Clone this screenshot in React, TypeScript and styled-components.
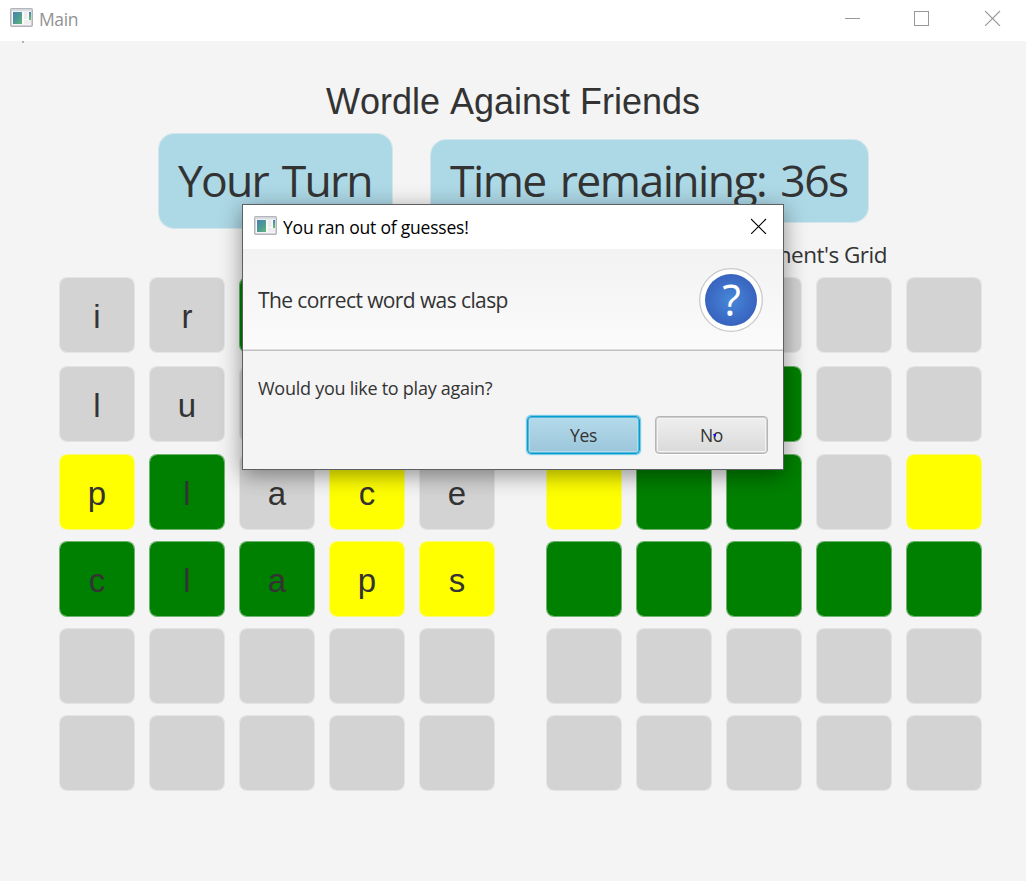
import React from "react";
import styled, { createGlobalStyle } from "styled-components";

const GlobalStyle = createGlobalStyle`
  *, *::before, *::after { box-sizing: border-box; }
  body { margin: 0; background: #f4f4f4; overflow: hidden; }
`;

const uiFont = `"Open Sans", "Noto Sans", sans-serif`;
const arial = `"Liberation Sans", Arial, sans-serif`;

const Window = styled.div`
  position: relative;
  width: 1026px;
  height: 881px;
  overflow: hidden;
  background: #f4f4f4;
  color: #333;
  font-family: ${uiFont};
`;

const Label = styled.span<{ $size: number; $spacing?: number; $color?: string; $line?: number }>`
  display: block;
  white-space: nowrap;
  font-size: ${(p) => p.$size}px;
  line-height: ${(p) => p.$line ?? 26}px;
  letter-spacing: ${(p) => p.$spacing ?? 0}px;
  color: ${(p) => p.$color ?? "#333"};
`;

const BadgeLabel = styled(Label)`
  word-spacing: 4px;
`;

const TitleBar = styled.header`
  display: flex;
  align-items: flex-start;
  justify-content: space-between;
  height: 41px;
  padding: 8px 25px 0 10px;
  background: #fff;
`;

const TitleGroup = styled.div`
  display: flex;
  gap: 6px;
`;

const TitleText = styled.div`
  margin-top: -2px;
`;

const WindowControls = styled.div`
  display: flex;
  gap: 54px;
  padding-top: 2px;
`;

const ControlGroup = styled.div`
  display: flex;
  gap: 54px;
  margin-right: 2px;
`;

const Heading = styled.h1`
  margin: 40px 0 0;
  height: 41px;
  font: 400 36px/41px ${arial};
  font-kerning: none;
  text-align: center;
  color: #333;
`;

const BadgeRow = styled.div`
  display: flex;
  align-items: center;
  gap: 37px;
  height: 96px;
  margin: 11px 0 0 158px;
`;

const Badge = styled.div<{ $width: number; $height: number }>`
  width: ${(p) => p.$width}px;
  height: ${(p) => p.$height}px;
  padding: 0 0 2px 19px;
  display: flex;
  align-items: center;
  border: 1px solid rgba(173, 216, 230, 0.5);
  border-radius: 16px;
  background: #add8e6;
  background-clip: padding-box;
`;

const GridCaption = styled.div`
  display: flex;
  justify-content: flex-end;
  margin: 13px 139px 9px 0;
`;

const Boards = styled.main`
  display: flex;
  gap: 51px;
  padding-left: 59px;
`;

const Board = styled.div`
  display: grid;
  grid-template-columns: repeat(5, 76px);
  grid-template-rows: 89px 88px repeat(4, 87px);
  column-gap: 14px;
`;

const tileColors = {
  x: ["#d3d3d3", "rgba(211,211,211,.5)"],
  g: ["#008000", "rgba(0,128,0,.55)"],
  y: ["#ffff00", "rgba(255,255,0,.5)"],
};
type Mark = keyof typeof tileColors;

const Tile = styled.div<{ $mark: Mark }>`
  height: 76px;
  border: 1px solid ${(p) => tileColors[p.$mark][1]};
  border-radius: 8px;
  background: ${(p) => tileColors[p.$mark][0]};
  background-clip: padding-box;
  font: 400 33px/78px ${arial};
  text-align: center;
  color: #333;
`;

const Dialog = styled.section`
  position: absolute;
  left: 242px;
  top: 204px;
  width: 542px;
  height: 266px;
  display: flex;
  flex-direction: column;
  border: 1px solid #5c6063;
  background: #f4f4f4;
  box-shadow: 0 5px 21px rgba(0, 0, 0, 0.42);
`;

const DialogTitle = styled.div`
  display: flex;
  align-items: center;
  justify-content: space-between;
  height: 44px;
  padding: 0 16px 0 11px;
  background: #fff;
`;

const DialogTitleGroup = styled(TitleGroup)`
  height: 22px;
`;

const DialogClose = styled.div`
  display: flex;
  padding-bottom: 2px;
`;

const DialogHeader = styled.div`
  display: flex;
  align-items: center;
  justify-content: space-between;
  height: 102px;
  padding: 0 20px 0 15px;
  border-bottom: 1px solid #c0c0c0;
  box-shadow: inset 0 -1px #dedede;
  background: linear-gradient(#f2f2f2, #fbfbfb);
`;

const HeaderText = styled.div`
  padding-top: 1px;
`;

const DialogBody = styled.div`
  padding: 24px 15px 0;
`;

const ButtonRow = styled.div`
  display: flex;
  justify-content: flex-end;
  gap: 15px;
  margin-top: 15px;
`;

const DialogButton = styled.button<{ $primary?: boolean }>`
  position: relative;
  width: 113px;
  height: 38px;
  padding: 0 0 1px;
  font-family: ${uiFont};
  border-radius: 4px;
  border: 1px solid ${(p) => (p.$primary ? "#039ed3" : "#b5b5b5")};
  background: ${(p) =>
    p.$primary ? "linear-gradient(#b4dbeb, #9bc5da)" : "linear-gradient(#efefef, #d9d9d9)"};
  box-shadow: ${(p) =>
    p.$primary
      ? "0 0 0 1px #7cc8e3, 0 0 0 2px #dceff5, inset 0 0 0 1px #58b7d9, inset 0 0 0 2px #b4dceb"
      : "inset 0 0 0 1px #cfcfcf, inset 0 0 0 2px #f3f3f3, 0 1px #fff"};
`;

const CaretDot = styled.i`
  position: absolute;
  left: 57px;
  top: 17px;
  width: 3px;
  height: 3px;
  background: #1010ff;
  clip-path: polygon(0 0, 100% 0, 100% 60%, 70% 100%, 30% 60%);
`;

const Speck = styled.i`
  position: absolute;
  left: 22px;
  top: 41px;
  width: 2px;
  height: 2px;
  background: #b4b4b4;
`;

const AppIcon = ({ id }: { id: string }) => (
  <svg width="23" height="19" viewBox="0 0 23 19">
    <defs>
      <linearGradient id={`${id}a`} x1="0" y1="0" x2="1" y2="1">
        <stop offset="0" stopColor="#4a7fb0" />
        <stop offset="0.55" stopColor="#4d9c94" />
        <stop offset="1" stopColor="#63b777" />
      </linearGradient>
      <linearGradient id={`${id}b`} x1="0" y1="0" x2="0" y2="1">
        <stop offset="0" stopColor="#4a7fb0" />
        <stop offset="1" stopColor="#62c070" />
      </linearGradient>
    </defs>
    <rect x="0.75" y="0.75" width="21.5" height="17.5" rx="1" fill="#f1f1f3" stroke="#b2b6bb" strokeWidth="1.5" />
    <rect x="1.5" y="1.5" width="20" height="2" fill="#d7dbe1" />
    <rect x="2" y="3.5" width="19" height="13" fill="#fafafa" />
    <rect x="3" y="4" width="9" height="12" fill={`url(#${id}a)`} />
    <rect x="14" y="4" width="3.5" height="7" fill="#ececec" />
    <rect x="14" y="12" width="7" height="4" fill="#eeeeee" />
    <rect x="19" y="4" width="2" height="8" fill={`url(#${id}b)`} />
  </svg>
);

const CloseIcon = ({ color }: { color: string }) => (
  <svg width="16" height="16" viewBox="0 0 16 16" stroke={color} strokeWidth="1.1">
    <path d="M0 1L15 16M15 1L0 16" />
  </svg>
);

const QuestionIcon = () => (
  <svg width="64" height="64" viewBox="0 0 64 64">
    <defs>
      <radialGradient id="ball">
        <stop offset="0" stopColor="#4788d8" />
        <stop offset="1" stopColor="#3863bf" />
      </radialGradient>
    </defs>
    <circle cx="32" cy="32" r="31.3" fill="#fff" stroke="#c9c9c9" strokeWidth="1.3" />
    <circle cx="32" cy="32" r="26" fill="url(#ball)" />
    <text x="32.5" y="47.5" fontSize="43" fill="#fff" textAnchor="middle" fontFamily='"Open Sans", "Noto Sans", sans-serif'>
      ?
    </text>
  </svg>
);

const myLetters = "ir   lu   place" + "claps";
const myMarks = "xxgxx" + "xxxxx" + "ygxyx" + "gggyy" + "xxxxx" + "xxxxx";
const theirMarks = "xxxxx" + "xxgxx" + "yggxy" + "ggggg" + "xxxxx" + "xxxxx";

const renderTiles = (marks: string, letters = "") =>
  marks.split("").map((mark, i) => (
    <Tile key={i} $mark={mark as Mark}>
      {(letters[i] ?? "").trim()}
    </Tile>
  ));

export default function App() {
  return (
    <Window>
      <GlobalStyle />
      <TitleBar>
        <TitleGroup>
          <AppIcon id="main" />
          <TitleText>
            <Label $size={17.5} $spacing={-0.4} $color="#929292">Main</Label>
          </TitleText>
        </TitleGroup>
        <WindowControls>
          <ControlGroup>
            <svg width="15" height="16" viewBox="0 0 15 16">
              <path d="M0 8.5H15" stroke="#999" />
            </svg>
            <svg width="15" height="16" viewBox="0 0 15 16">
              <rect x="0.5" y="1.5" width="14" height="14" fill="none" stroke="#999" />
            </svg>
          </ControlGroup>
          <CloseIcon color="#999" />
        </WindowControls>
      </TitleBar>
      <Speck />

      <Heading>Wordle Against Friends</Heading>
      <BadgeRow>
        <Badge $width={235} $height={96}>
          <BadgeLabel $size={44.5} $spacing={-1.8} $line={60}>Your Turn</BadgeLabel>
        </Badge>
        <Badge $width={439} $height={84}>
          <BadgeLabel $size={44.5} $spacing={-1.55} $line={60}>Time remaining: 36s</BadgeLabel>
        </Badge>
      </BadgeRow>
      <GridCaption>
        <Label $size={22.5} $spacing={-0.5}>Opponent's Grid</Label>
      </GridCaption>
      <Boards>
        <Board>{renderTiles(myMarks, myLetters)}</Board>
        <Board>{renderTiles(theirMarks)}</Board>
      </Boards>

      <Dialog>
        <DialogTitle>
          <DialogTitleGroup>
            <AppIcon id="dlg" />
            <TitleText>
              <Label $size={17.5} $spacing={-0.2} $color="#000">You ran out of guesses!</Label>
            </TitleText>
          </DialogTitleGroup>
          <DialogClose>
            <CloseIcon color="#000" />
          </DialogClose>
        </DialogTitle>
        <DialogHeader>
          <HeaderText>
            <Label $size={21} $spacing={-0.6}>The correct word was clasp</Label>
          </HeaderText>
          <QuestionIcon />
        </DialogHeader>
        <DialogBody>
          <Label $size={18} $spacing={-0.26}>Would you like to play again?</Label>
          <ButtonRow>
            <DialogButton $primary>
              <Label $size={17.5} $spacing={-0.3}>Yes</Label>
            </DialogButton>
            <DialogButton>
              <Label $size={17.5} $spacing={-0.3}>No</Label>
              <CaretDot />
            </DialogButton>
          </ButtonRow>
        </DialogBody>
      </Dialog>
    </Window>
  );
}
